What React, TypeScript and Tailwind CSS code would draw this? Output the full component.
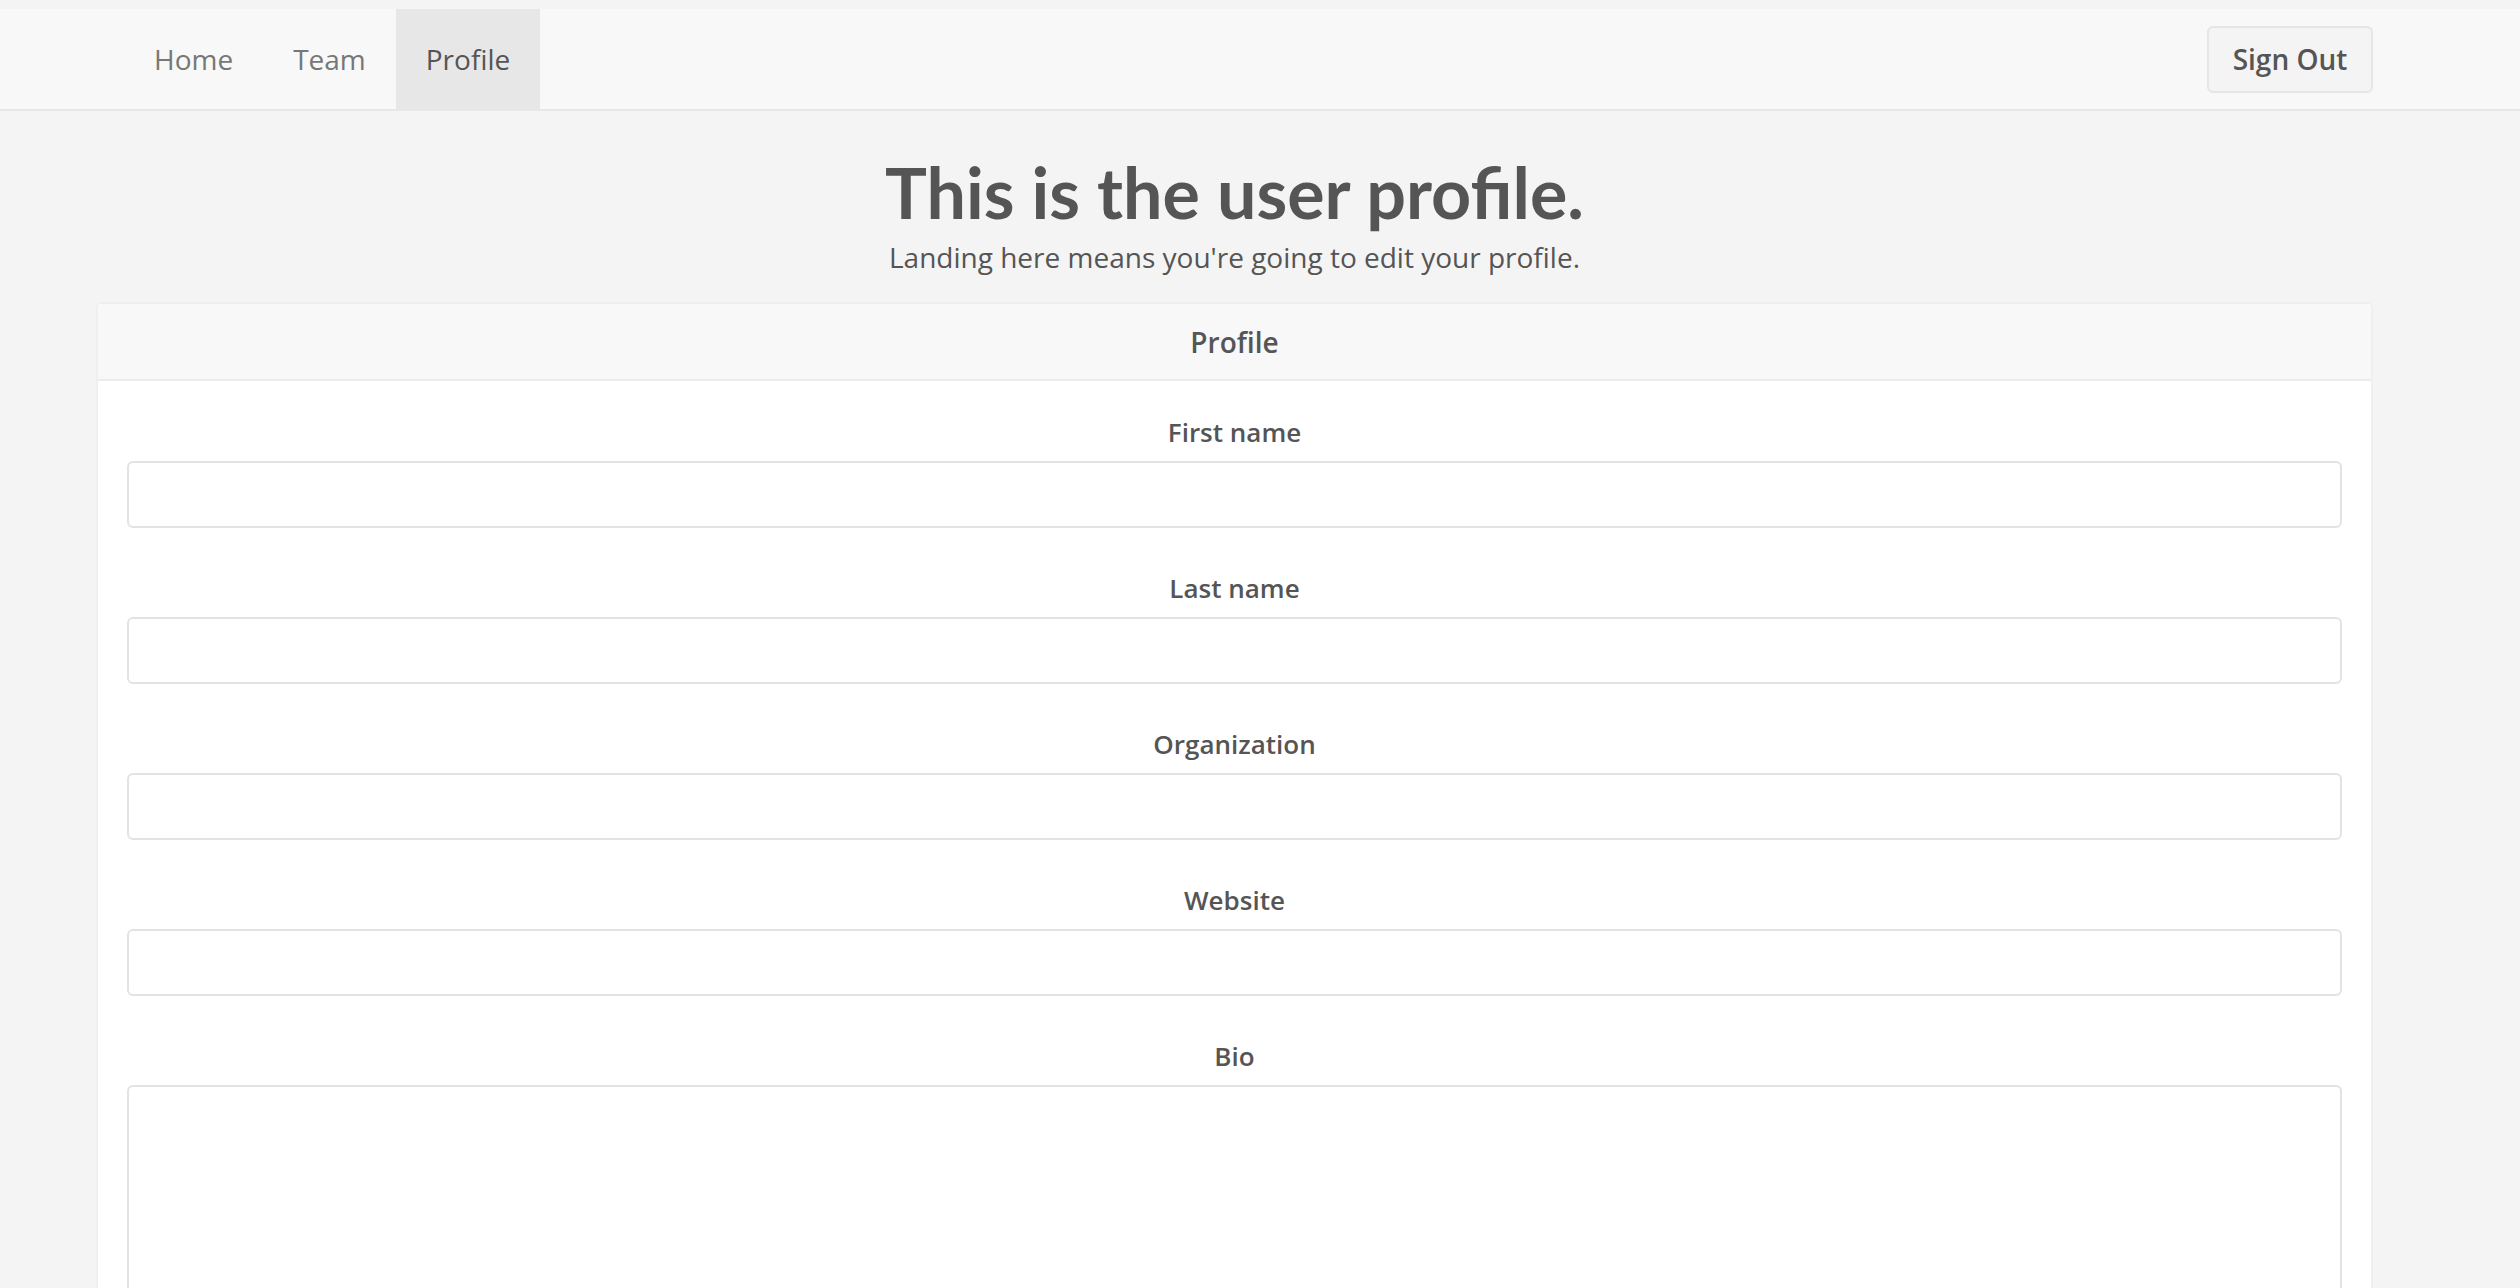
import React from "react";

const fields = ["First name", "Last name", "Organization", "Website"];

const navLinks = [
  { label: "Home", active: false },
  { label: "Team", active: false },
  { label: "Profile", active: true },
];

const Navbar = () => {
  return (
    <div className="pt-[9px]">
      <nav className="h-[102px] bg-[#f8f8f8] border-b-2 border-[#e7e7e7]">
        <div className="ml-[96px] w-[2277px] h-[100px] flex items-center justify-between">
          <ul className="flex h-full ml-[28px]">
            {navLinks.map((link) => (
              <li
                key={link.label}
                className={
                  link.active
                    ? "flex items-center h-full px-[30px] bg-[#e7e7e7] text-[#555555]"
                    : "flex items-center h-full px-[30px] text-[#777777]"
                }
              >
                <a className="text-[28px] leading-[40px] cursor-pointer">{link.label}</a>
              </li>
            ))}
          </ul>
          <button className="w-[166px] h-[67px] rounded-[6px] border-2 border-[#e6e6e6] bg-[#f4f4f4] text-[28px] font-semibold text-[#555555]">
            Sign Out
          </button>
        </div>
      </nav>
    </div>
  );
};

const Field = ({ label, area }: { label: string; area?: boolean }) => {
  return (
    <div className="flex flex-col">
      <label className="text-center text-[26px] leading-[37px] font-semibold text-[#555555] mb-[10px]">
        {label}
      </label>
      {area ? (
        <textarea className="h-[320px] w-full rounded-[6px] border-2 border-[#e3e3e3] bg-white outline-none resize-none" />
      ) : (
        <input className="h-[67px] w-full rounded-[6px] border-2 border-[#e3e3e3] bg-white outline-none" />
      )}
    </div>
  );
};

export default function App() {
  return (
    <div
      className="min-h-screen bg-[#f4f4f4]"
      style={{ fontFamily: '"Open Sans", "Liberation Sans", sans-serif' }}
    >
      <Navbar />

      <div className="ml-[96px] w-[2277px]">
        {/* Page heading */}
        <div className="flex flex-col items-center mt-[43px]">
          <h1
            className="text-[70px] leading-[77px] font-bold text-[#555555]"
            style={{ fontFamily: 'Lato, "Open Sans", sans-serif' }}
          >
            This is the user profile.
          </h1>
          <p className="mt-[8px] text-[28px] leading-[37px] text-[#555555]">
            Landing here means you're going to edit your profile.
          </p>
        </div>

        {/* Profile card */}
        <div className="mt-[26px] rounded-t-[6px] border-2 border-[#efefef] bg-white">
          <div className="h-[77px] flex items-center justify-center bg-[#f8f8f8] border-b-2 border-[#ececec] rounded-t-[5px]">
            <h3 className="text-[28px] font-semibold text-[#555555]">Profile</h3>
          </div>
          <div className="px-[29px] pt-[33px] pb-[40px] flex flex-col gap-[42px]">
            {fields.map((f) => (
              <Field key={f} label={f} />
            ))}
            <Field label="Bio" area />
          </div>
        </div>
      </div>
    </div>
  );
}
